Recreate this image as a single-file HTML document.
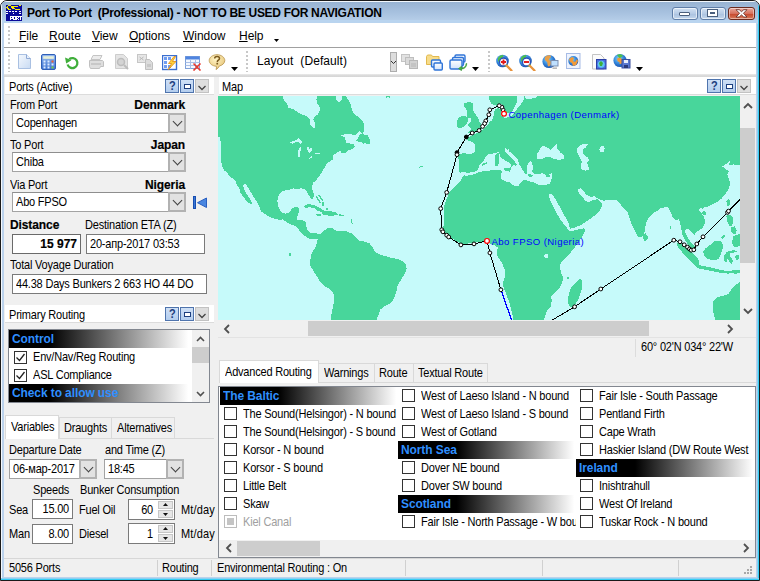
<!DOCTYPE html>
<html><head><meta charset="utf-8"><title>Port To Port</title>
<style>
*{box-sizing:border-box;margin:0;padding:0}
html,body{width:760px;height:581px;overflow:hidden;background:#fff}
body{font-family:"Liberation Sans",sans-serif;font-size:11px;color:#000;position:relative;letter-spacing:-0.2px}
.a{position:absolute}
.t{position:absolute;white-space:pre;line-height:13px;height:13px;transform:scaleY(1.13);transform-origin:0 10px}
.n{transform:none}
.b{font-weight:bold}
#win{position:absolute;left:0;top:0;width:760px;height:581px;background:#bbd2ec;border:1px solid #1a1a1a;border-radius:7px 7px 0 0;overflow:hidden}
#title{position:absolute;left:0;top:0;width:758px;height:22px;background:linear-gradient(#98b3d2 0,#a7c1df 50%,#b4cce7 84%,#b9d4ef 88%,#b9d4ef 100%);border-top:1px solid #f2f7fc}
#client{position:absolute;left:4px;top:23px;width:752px;height:554px;background:#f0f0f0}
.inp{position:absolute;background:#fff;border:1px solid #7a7a7a;height:20px}
.inp .t{top:3px}
.cb{position:absolute;background:#fff;border:1px solid #a3a3a3;border-top-color:#8e8e8e;height:20px}
.cb .t{top:3px;left:3px}
.cb .dd{position:absolute;right:-1px;top:-1px;width:18px;height:20px;background:#e2e2e2;border:2px solid #b2b2b2}
.cb .dd:after{content:"";position:absolute;left:3.500px;top:3px;width:6px;height:6px;border-right:1px solid #404040;border-bottom:1px solid #404040;transform:rotate(45deg) scale(1,1)}
.hdr{position:absolute;background:#fff;height:18px}
.hb{position:absolute;top:3px;width:14px;height:14px;background:linear-gradient(#cfe0f6,#b3cdee);border:1px solid #4f74ad}
.bb{-webkit-text-stroke:0.18px #000}
.chk{position:absolute;width:13px;height:13px;background:#fff;border:1px solid #333}
.tab{position:absolute;background:#f0f0f0;border:1px solid #d9d9d9;border-bottom:none}
.tab.sel{background:#fff}
.grad{position:absolute;height:18px;background:linear-gradient(90deg,#000 0%,#000 33%,#fff 99%)}
.grad .t{color:#2f8fff;font-weight:bold;font-size:12px;top:3px;left:3px;letter-spacing:-0.1px}
.sep{position:absolute;width:1px;background:#d0d0d0}
</style></head><body>
<div id="win"><div id="title"></div><div class="a" style="left:0;top:1px;width:1px;height:578px;background:#f4f8fc"></div><div class="a" style="left:756px;top:23px;width:1px;height:556px;background:#8fd0f0"></div><div class="a" style="left:757px;top:4px;width:1px;height:575px;background:#35cdf5"></div><div class="a" style="left:0;top:577px;width:758px;height:1px;background:#8fd0f0"></div><div class="a" style="left:0;top:578px;width:758px;height:1px;background:#35cdf5"></div></div>
<div id="client" class="a" style="left:4px;top:23px"></div>
<!-- app icon -->
<svg class="a" style="left:6px;top:5px" width="16" height="16" viewBox="0 0 16 16" shape-rendering="crispEdges"><rect width="16" height="16" fill="#0a0a9a"/><rect x="2" y="0" width="3" height="1" fill="#f4ec00"/><rect x="13" y="0" width="2" height="1" fill="#f4ec00"/><rect x="1" y="1" width="1" height="1" fill="#f4ec00"/><rect x="5" y="1" width="7" height="1" fill="#f4ec00"/><rect x="0" y="2" width="2" height="1" fill="#f4ec00"/><rect x="5" y="2" width="3" height="1" fill="#f4ec00"/><rect x="1" y="3" width="2" height="1" fill="#f4ec00"/><rect x="6" y="3" width="3" height="1" fill="#f4ec00"/><rect x="2" y="4" width="3" height="1" fill="#f4ec00"/><rect x="9" y="4" width="5" height="1" fill="#f4ec00"/><rect x="0" y="6" width="2" height="1" fill="#fff"/><rect x="3" y="6" width="2" height="1" fill="#fff"/><rect x="6" y="6" width="2" height="1" fill="#fff"/><rect x="9" y="6" width="2" height="1" fill="#fff"/><rect x="13" y="6" width="2" height="1" fill="#fff"/><rect x="0" y="8" width="2" height="1" fill="#fff"/><rect x="7" y="8" width="1" height="1" fill="#fff"/><rect x="13" y="8" width="2" height="1" fill="#fff"/><rect x="4" y="11" width="1" height="1" fill="#fff"/><rect x="5" y="11" width="1" height="1" fill="#fff"/><rect x="6" y="11" width="1" height="1" fill="#fff"/><rect x="4" y="12" width="1" height="1" fill="#fff"/><rect x="6" y="12" width="1" height="1" fill="#fff"/><rect x="4" y="13" width="1" height="1" fill="#fff"/><rect x="5" y="13" width="1" height="1" fill="#fff"/><rect x="6" y="13" width="1" height="1" fill="#fff"/><rect x="4" y="14" width="1" height="1" fill="#fff"/><rect x="7" y="11" width="1" height="1" fill="#fff"/><rect x="8" y="11" width="1" height="1" fill="#fff"/><rect x="9" y="11" width="1" height="1" fill="#fff"/><rect x="7" y="12" width="1" height="1" fill="#fff"/><rect x="9" y="12" width="1" height="1" fill="#fff"/><rect x="7" y="13" width="1" height="1" fill="#fff"/><rect x="9" y="13" width="1" height="1" fill="#fff"/><rect x="7" y="14" width="1" height="1" fill="#fff"/><rect x="8" y="14" width="1" height="1" fill="#fff"/><rect x="9" y="14" width="1" height="1" fill="#fff"/><rect x="10" y="11" width="1" height="1" fill="#fff"/><rect x="11" y="11" width="1" height="1" fill="#fff"/><rect x="12" y="11" width="1" height="1" fill="#fff"/><rect x="10" y="12" width="1" height="1" fill="#fff"/><rect x="12" y="12" width="1" height="1" fill="#fff"/><rect x="10" y="13" width="1" height="1" fill="#fff"/><rect x="11" y="13" width="1" height="1" fill="#fff"/><rect x="10" y="14" width="1" height="1" fill="#fff"/><rect x="12" y="14" width="1" height="1" fill="#fff"/><rect x="13" y="11" width="1" height="1" fill="#fff"/><rect x="14" y="11" width="1" height="1" fill="#fff"/><rect x="15" y="11" width="1" height="1" fill="#fff"/><rect x="14" y="12" width="1" height="1" fill="#fff"/><rect x="14" y="13" width="1" height="1" fill="#fff"/><rect x="14" y="14" width="1" height="1" fill="#fff"/></svg>
<div class="t b n" style="left:27px;top:6px;font-size:12px;line-height:15px;height:15px;letter-spacing:-0.31px">Port To Port  (Professional) - NOT TO BE USED FOR NAVIGATION</div>
<!-- window buttons -->
<div class="a" style="left:672px;top:7px;width:26px;height:13px;border:1px solid #5f7ea8;border-radius:3px;background:linear-gradient(#d3e2f3,#b7cce6 50%,#a9c1df 51%,#c3d6ec);box-shadow:inset 0 0 0 1px rgba(255,255,255,.6)"><div class="a" style="left:6px;top:4px;width:11px;height:4px;background:#fff;border:1px solid #4a5f7d;border-radius:1px"></div></div>
<div class="a" style="left:700px;top:7px;width:26px;height:13px;border:1px solid #5f7ea8;border-radius:3px;background:linear-gradient(#d3e2f3,#b7cce6 50%,#a9c1df 51%,#c3d6ec);box-shadow:inset 0 0 0 1px rgba(255,255,255,.6)"><div class="a" style="left:6px;top:1px;width:11px;height:8px;background:#fff;border:1px solid #4a5f7d"><div class="a" style="left:2px;top:2px;width:5px;height:2px;background:#b7cce6;border:1px solid #4a5f7d"></div></div></div>
<div class="a" style="left:728px;top:7px;width:27px;height:13px;border:1px solid #6b2a1e;border-radius:3px;background:linear-gradient(#e9a99d,#d6705c 50%,#c4452b 51%,#d87a5a);box-shadow:inset 0 0 0 1px rgba(255,255,255,.45)">
<svg class="a" style="left:6px;top:1px" width="13" height="9" viewBox="0 0 13 9"><path d="M1 .7h3.200l2.300 2 2.300-2h3.200L8.400 4.300l3.600 3.700h-3.200l-2.300-2.100-2.300 2.100H1l3.600-3.700z" fill="#fff" stroke="#5a2a22" stroke-width=".8"/></svg></div>
<!-- menu bar -->
<div class="a" style="left:4px;top:23px;width:752px;height:24px;background:#fff"></div>
<div class="a" style="left:4px;top:47px;width:752px;height:1px;background:#a0a0a0"></div>
<div class="a" style="left:8px;top:26px;width:2px;height:19px;background:repeating-linear-gradient(#c8c8c8 0,#c8c8c8 2px,#fff 2px,#fff 4px)"></div>
<div class="t n" style="left:19px;top:29px;font-size:12px;line-height:15px;height:15px;letter-spacing:-0.05px"><u>F</u>ile</div>
<div class="t n" style="left:49px;top:29px;font-size:12px;line-height:15px;height:15px;letter-spacing:-0.05px"><u>R</u>oute</div>
<div class="t n" style="left:92px;top:29px;font-size:12px;line-height:15px;height:15px;letter-spacing:-0.05px"><u>V</u>iew</div>
<div class="t n" style="left:129px;top:29px;font-size:12px;line-height:15px;height:15px;letter-spacing:-0.05px"><u>O</u>ptions</div>
<div class="t n" style="left:183px;top:29px;font-size:12px;line-height:15px;height:15px;letter-spacing:-0.05px"><u>W</u>indow</div>
<div class="t n" style="left:239px;top:29px;font-size:12px;line-height:15px;height:15px;letter-spacing:-0.05px"><u>H</u>elp</div>
<svg class="a" style="left:273.5px;top:39px" width="5" height="3"><path d="M0 0h5L2.500 3z" fill="#000"/></svg>
<!-- toolbar -->
<div class="a" style="left:4px;top:48px;width:752px;height:26px;background:#fff"></div>
<div class="a" style="left:4px;top:74px;width:752px;height:3px;background:linear-gradient(#ececec,#dcdcdc 40%,#d6d6d6)"></div>
<div class="a" style="left:8px;top:51px;width:2px;height:21px;background:repeating-linear-gradient(#c8c8c8 0,#c8c8c8 2px,#fff 2px,#fff 4px)"></div>
<div class="a" style="left:246px;top:51px;width:2px;height:21px;background:repeating-linear-gradient(#c8c8c8 0,#c8c8c8 2px,#fff 2px,#fff 4px)"></div>
<div class="a" style="left:488px;top:51px;width:2px;height:21px;background:repeating-linear-gradient(#c8c8c8 0,#c8c8c8 2px,#fff 2px,#fff 4px)"></div>
<div class="t n" style="left:257px;top:54px;font-size:12px;line-height:15px;height:15px;letter-spacing:0.08px">Layout  (Default)</div>
<svg width="0" height="0" style="position:absolute"><defs>
<linearGradient id="gPage" x1="0" y1="0" x2="1" y2="1"><stop offset="0" stop-color="#f4f8fd"/><stop offset="1" stop-color="#c9dbf3"/></linearGradient>
<linearGradient id="gCalc" x1="0" y1="0" x2="0" y2="1"><stop offset="0" stop-color="#8db4ee"/><stop offset="1" stop-color="#3f74d2"/></linearGradient>
<radialGradient id="gGlobe" cx=".4" cy=".35" r=".7"><stop offset="0" stop-color="#7fd3ff"/><stop offset=".6" stop-color="#2f7fd6"/><stop offset="1" stop-color="#1b4fa8"/></radialGradient>
<radialGradient id="gBub" cx=".4" cy=".3" r=".8"><stop offset="0" stop-color="#fff3c4"/><stop offset=".7" stop-color="#ecd08a"/><stop offset="1" stop-color="#c9a557"/></radialGradient>
<linearGradient id="gWin" x1="0" y1="0" x2="0" y2="1"><stop offset="0" stop-color="#ffffff"/><stop offset="1" stop-color="#cfe1fb"/></linearGradient>
</defs></svg>
<!-- 1 new doc -->
<svg class="a" style="left:17px;top:53px" width="16" height="17" viewBox="0 0 16 17"><path d="M1.5 1.5h8l4 4v10h-12z" fill="url(#gPage)" stroke="#a9c0e2" stroke-width="1"/><path d="M9.5 1.5v4h4" fill="#e8f0fb" stroke="#8fa9d4" stroke-width="1"/></svg>
<!-- 2 calculator -->
<svg class="a" style="left:41px;top:54px" width="15" height="16" viewBox="0 0 15 16"><rect x=".5" y=".5" width="14" height="15" rx="1.5" fill="url(#gCalc)" stroke="#2f5fb8"/><rect x="2" y="2" width="11" height="3" fill="#e6f0d8" stroke="#a8c0e8" stroke-width=".5"/>
<g fill="#dce9ff"><rect x="2.5" y="6.5" width="2" height="2"/><rect x="6.5" y="6.5" width="2" height="2"/><rect x="2.5" y="9.5" width="2" height="2"/><rect x="6.5" y="9.5" width="2" height="2"/><rect x="2.5" y="12.5" width="2" height="2"/><rect x="6.5" y="12.5" width="2" height="2"/><rect x="10.5" y="9.5" width="2" height="2"/></g><rect x="10.5" y="6.5" width="2" height="2" fill="#f06030"/><rect x="10.5" y="12.5" width="2" height="2" fill="#7fd040"/></svg>
<!-- 3 refresh -->
<svg class="a" style="left:64px;top:55px" width="16" height="15" viewBox="0 0 16 15"><path d="M5.2 4.2A5 5 0 1 1 3.6 9.5" fill="none" stroke="#3fae3a" stroke-width="2.3"/><path d="M1 2.5l1.2 6 5.2-3.2z" fill="#3fae3a"/></svg>
<!-- 4 printer disabled -->
<svg class="a" style="left:88px;top:54px" width="17" height="16" viewBox="0 0 17 16"><path d="M5 1.5h9l-2 4h-9z" fill="#ececec" stroke="#c4c4c4"/><path d="M1.5 6.5h13l1 1v5h-3l-1 2h-9l-1-2z" fill="#dedede" stroke="#c0c0c0"/><rect x="3" y="9" width="10" height="2" fill="#c8c8c8"/></svg>
<!-- 5 preview disabled -->
<svg class="a" style="left:114px;top:54px" width="16" height="16" viewBox="0 0 16 16"><path d="M1.5 .5h8l4 4v10h-12z" fill="#e4e4e4" stroke="#cdcdcd"/><circle cx="7" cy="8" r="3.5" fill="#d4d4d4" stroke="#bdbdbd" stroke-width="1.5"/><path d="M10 11l4 4" stroke="#bdbdbd" stroke-width="2"/></svg>
<!-- 6 copy disabled -->
<svg class="a" style="left:137px;top:54px" width="17" height="16" viewBox="0 0 17 16"><rect x=".5" y=".5" width="9" height="8" fill="#e6e6e6" stroke="#c6c6c6"/><path d="M2.5 3l4 3M6.5 3l-4 3" stroke="#b8b8b8"/><path d="M8.500 5.500h4l3 3v7h-7z" fill="#dcdcdc" stroke="#c0c0c0"/><rect x="10" y="10" width="4" height="3" fill="#c8c8c8"/></svg>
<!-- 7 grid + lightning -->
<svg class="a" style="left:162px;top:55px" width="16" height="16" viewBox="0 0 16 16"><rect x=".5" y=".5" width="14" height="14" fill="#fff" stroke="#3b6fd0" stroke-width="1.4"/><g fill="#6f9cf0"><rect x="2" y="2" width="3" height="3"/><rect x="2" y="6" width="3" height="3"/><rect x="2" y="10" width="3" height="3"/><rect x="6" y="2" width="3" height="3"/><rect x="6" y="10" width="3" height="3"/></g><path d="M12 1.500L6.500 8.500h3L6 15l8-8.500h-3.500L13.500 1.500z" fill="#ffd23a" stroke="#e08a10" stroke-width=".8"/></svg>
<!-- 8 table + x -->
<svg class="a" style="left:185px;top:56px" width="17" height="15" viewBox="0 0 17 15"><rect x=".5" y=".5" width="14" height="12" fill="#f4f8ff" stroke="#7fa0d8"/><rect x=".5" y=".5" width="14" height="3" fill="#4f84e0"/><path d="M.5 6.500h14M.5 9.500h14M5.500 3.500v9M10.500 3.500v9" stroke="#a9bfe6"/><path d="M8.500 7.500l7 7M15.500 7.500l-7 7" stroke="#e8392e" stroke-width="1.6"/></svg>
<!-- 9 help bubble -->
<svg class="a" style="left:208px;top:54px" width="18" height="16" viewBox="0 0 18 16"><path d="M9 .7c4.300 0 7.800 2.600 7.800 5.800 0 2.600-2.300 4.800-5.500 5.500-.6 1.500-1.700 2.700-3.300 3.500.5-1 .6-2.100.4-3.200C4.200 12 1.200 9.500 1.200 6.500 1.200 3.300 4.700 .7 9 .7z" fill="url(#gBub)" stroke="#b8934a" stroke-width=".8"/><path d="M6.700 4.600c0-1.300 1-2.100 2.400-2.100s2.400.8 2.400 2c0 1.700-2.200 1.700-2.200 3.400" fill="none" stroke="#7a5a1e" stroke-width="1.500"/><rect x="8.400" y="8.800" width="1.700" height="1.700" fill="#7a5a1e"/></svg>
<svg class="a" style="left:231px;top:67px" width="7" height="4"><path d="M0 0h7L3.500 4z" fill="#000"/></svg>
<!-- layout dropdown -->
<div class="a" style="left:390px;top:52px;width:7px;height:20px;background:#dddddd;border:1px solid #adadad"></div>
<svg class="a" style="left:390px;top:60px" width="7" height="5"><path d="M1 1l2.500 2.500L6 1" fill="none" stroke="#333" stroke-width="1"/></svg>
<!-- disabled windows -->
<svg class="a" style="left:401px;top:54px" width="18" height="16" viewBox="0 0 18 16"><rect x=".5" y=".5" width="8" height="7" fill="#e2e2e2" stroke="#c4c4c4"/><rect x="4.500" y="3.500" width="8" height="7" fill="#dadada" stroke="#bebebe"/><rect x="8.500" y="6.500" width="8" height="8" fill="#d2d2d2" stroke="#b8b8b8"/><rect x="10" y="9" width="5" height="4" fill="#c4c4c4"/></svg>
<!-- folder + windows -->
<svg class="a" style="left:426px;top:54px" width="17" height="17" viewBox="0 0 17 17"><path d="M.5 2.500l1-1.500h4l1 1.500h6.500v8h-12.500z" fill="#f7dc8a" stroke="#e2b94e"/><rect x="5.500" y="6" width="9" height="7" rx="1" fill="url(#gWin)" stroke="#2f74d8" stroke-width="1.400"/><rect x="8" y="9" width="8.300" height="7" rx="1" fill="url(#gWin)" stroke="#2f74d8" stroke-width="1.400"/></svg>
<!-- windows + arrow -->
<svg class="a" style="left:449px;top:54px" width="19" height="17" viewBox="0 0 19 17"><rect x="6" y="1" width="10" height="7" rx="1.200" fill="url(#gWin)" stroke="#2f74d8" stroke-width="1.400"/><rect x="3.500" y="3.500" width="11" height="8" rx="1.200" fill="url(#gWin)" stroke="#2f74d8" stroke-width="1.400"/><rect x="1" y="6" width="12" height="9" rx="1.200" fill="url(#gWin)" stroke="#2f74d8" stroke-width="1.400"/><path d="M17 9.500c0 3-2 4.500-4.500 4.500v-1.800L9.500 14.500l3 2.300V15c3 0 5.300-2 5.300-5.500z" fill="#46b43c" stroke="#2f8f2a" stroke-width=".5"/></svg>
<svg class="a" style="left:472px;top:67px" width="7" height="4"><path d="M0 0h7L3.500 4z" fill="#000"/></svg>
<!-- zoom in -->
<svg class="a" style="left:495px;top:54px" width="18" height="17" viewBox="0 0 18 17"><circle cx="7.500" cy="7" r="6.300" fill="url(#gGlobe)"/><path d="M3 4c1-2 3-3 5-3 1 1 0 2-1 3s-2 1-2 3-1 1-2 0z M10 9c1 0 3 1 3 2-1 1-3 2-4 2s0-3 1-4z" fill="#4cc04a"/><circle cx="8.500" cy="8" r="4" fill="#fff" stroke="#2a4fb8" stroke-width="1.300"/><path d="M6 8h5M8.500 5.500v5" stroke="#e01818" stroke-width="1.900"/><path d="M11.500 11.500l5 5" stroke="#e8923a" stroke-width="2.300" stroke-linecap="round"/></svg>
<!-- zoom out -->
<svg class="a" style="left:518px;top:54px" width="18" height="17" viewBox="0 0 18 17"><circle cx="7.500" cy="7" r="6.300" fill="url(#gGlobe)"/><path d="M3 4c1-2 3-3 5-3 1 1 0 2-1 3s-2 1-2 3-1 1-2 0z M10 9c1 0 3 1 3 2-1 1-3 2-4 2s0-3 1-4z" fill="#4cc04a"/><circle cx="8.500" cy="8" r="4" fill="#fff" stroke="#2a4fb8" stroke-width="1.300"/><path d="M6 8h5" stroke="#e01818" stroke-width="1.900"/><path d="M11.500 11.500l5 5" stroke="#e8923a" stroke-width="2.300" stroke-linecap="round"/></svg>
<!-- globe + monitor -->
<svg class="a" style="left:542px;top:54px" width="17" height="16" viewBox="0 0 17 16"><circle cx="7" cy="7.500" r="6.600" fill="url(#gGlobe)"/><path d="M3 3c2-2 5-2 6-1 0 2-2 2-2 4 2 1 3 2 2 4s-2 3-3 2 0-3-1-4-3-2-2-5z" fill="#e8a04a"/><rect x="9" y="6.500" width="7" height="5.500" fill="#bfe0ff" stroke="#7a8fb0"/><path d="M10.500 13.500h4.500v1.300h-4.500z" fill="#a8a8a8"/></svg>
<!-- map picture -->
<svg class="a" style="left:566px;top:53px" width="15" height="16" viewBox="0 0 15 16"><rect x=".5" y=".5" width="13.500" height="15" fill="#eef3fd" stroke="#a7bce6"/><circle cx="7.300" cy="8" r="5" fill="url(#gGlobe)"/><path d="M3 6l3-2 2 1-1 3 2 1 2-3 1 2-2 4-3 1-1-3-2-1z" fill="#f09a3a"/></svg>
<!-- doc globe -->
<svg class="a" style="left:591px;top:54px" width="16" height="16" viewBox="0 0 16 16"><path d="M1.500 .5h8l3.500 3.500v11h-11.500z" fill="#fbfbfb" stroke="#c4c4c4"/><rect x="5.500" y="5.500" width="9.500" height="9.500" fill="#4a6fe0" stroke="#2a3fa8"/><circle cx="10.200" cy="10.200" r="3.500" fill="#5fc7f0"/><path d="M8 9l2-2 2 2-1 3-2 0z" fill="#3fae3a"/></svg>
<!-- globe + floppy -->
<svg class="a" style="left:613px;top:53px" width="18" height="16" viewBox="0 0 18 16"><circle cx="7" cy="7.500" r="6.600" fill="url(#gGlobe)"/><path d="M4 2c2-1 5-1 6 1-1 1-3 1-3 3z" fill="#4cc04a"/><path d="M4.500 5c2-1 5 0 5 3s-2 3-3 3v-2c-2 0-3-2-2-4z" fill="#f09a3a"/><rect x="9" y="6.500" width="8" height="8.500" fill="#5a78d0" stroke="#3a4f9e"/><rect x="11" y="7" width="4" height="3" fill="#e8eefc"/><rect x="11" y="12" width="4" height="3" fill="#2a3a7a"/></svg>
<svg class="a" style="left:636px;top:67px" width="7" height="4"><path d="M0 0h7L3.500 4z" fill="#000"/></svg>
<!-- Ports header -->
<div class="hdr" style="left:5px;top:77px;width:209px"></div>
<div class="a" style="left:5px;top:94px;width:209px;height:1px;background:#dcdcdc"></div>
<div class="t" style="left:9px;top:81px">Ports (Active)</div>
<div class="hb" style="left:165px;top:79px"></div><div class="hb" style="left:180px;top:79px"></div><div class="hb" style="left:195px;top:79px;background:#dedede;border-color:#c2c2c2"></div>
<div class="t b" style="left:169px;top:80px;font-size:11px;color:#1d3f7f">?</div>
<div class="a" style="left:184px;top:84px;width:7px;height:5px;border:1px solid #1d3f7f;background:#fff"></div>
<svg class="a" style="left:198px;top:85px" width="8" height="6"><path d="M.5 1L4 4.500 7.500 1" fill="none" stroke="#444" stroke-width="1.300"/></svg>
<!-- Ports body -->
<div class="t" style="left:10px;top:99px">From Port</div><div class="t b bb" style="left:100px;width:85px;text-align:right;top:99px;font-size:12px;letter-spacing:-0.1px">Denmark</div>
<div class="cb" style="left:12px;top:113px;width:174px"><div class="t">Copenhagen</div><div class="dd"></div></div>
<div class="t" style="left:10px;top:139px">To Port</div><div class="t b bb" style="left:100px;width:85px;text-align:right;top:139px;font-size:12px;letter-spacing:-0.1px">Japan</div>
<div class="cb" style="left:12px;top:152px;width:174px"><div class="t">Chiba</div><div class="dd"></div></div>
<div class="t" style="left:10px;top:179px">Via Port</div><div class="t b bb" style="left:100px;width:85px;text-align:right;top:179px;font-size:12px;letter-spacing:-0.1px">Nigeria</div>
<div class="cb" style="left:12px;top:192px;width:174px"><div class="t">Abo FPSO</div><div class="dd"></div></div>
<svg class="a" style="left:193px;top:196px" width="15" height="13" viewBox="0 0 15 13"><rect x="0.5" y="0.5" width="2" height="12" fill="#3a78d8" stroke="#1a4fb0" stroke-width="1"/><path d="M13.500 2v9.500L4.500 6.700z" fill="#4a86e0" stroke="#2a5fc0" stroke-width="1"/></svg>
<div class="t b bb" style="left:10px;top:219px;font-size:12px;letter-spacing:-0.1px">Distance</div><div class="t" style="left:85px;top:219px">Destination ETA (Z)</div>
<div class="inp" style="left:12px;top:234px;width:69px;border:1px solid #6a6a6a"><div class="t b bb" style="right:3px;top:3px;font-size:12px;letter-spacing:0">15 977</div></div>
<div class="inp" style="left:86px;top:234px;width:119px"><div class="t" style="left:3px">20-апр-2017 03:53</div></div>
<div class="t" style="left:10px;top:259px">Total Voyage Duration</div>
<div class="inp" style="left:12px;top:274px;width:195px"><div class="t" style="left:3px">44.38 Days Bunkers 2 663 HO 44 DO</div></div>
<!-- Primary routing header -->
<div class="hdr" style="left:5px;top:305px;width:209px"></div>
<div class="a" style="left:5px;top:322px;width:209px;height:1px;background:#dcdcdc"></div>
<div class="t" style="left:9px;top:309px">Primary Routing</div>
<div class="hb" style="left:165px;top:307px"></div><div class="hb" style="left:180px;top:307px"></div><div class="hb" style="left:195px;top:307px;background:#dedede;border-color:#c2c2c2"></div>
<div class="t b" style="left:169px;top:308px;font-size:11px;color:#1d3f7f">?</div>
<div class="a" style="left:184px;top:312px;width:7px;height:5px;border:1px solid #1d3f7f;background:#fff"></div>
<svg class="a" style="left:198px;top:313px" width="8" height="6"><path d="M.5 1L4 4.500 7.500 1" fill="none" stroke="#444" stroke-width="1.300"/></svg>
<!-- routing list -->
<div class="a" style="left:8px;top:329px;width:202px;height:74px;background:#fff;border:1px solid #828790"></div>
<div class="grad" style="left:9px;top:330px;width:183px;background:linear-gradient(90deg,#000 0,#000 22%,#fff 98%)"><div class="t">Control</div></div>
<div class="chk" style="left:14px;top:351px"></div><svg class="a" style="left:15px;top:352px" width="11" height="11"><path d="M1.5 5.5l3 3 5-6.5" fill="none" stroke="#222" stroke-width="1.3"/></svg>
<div class="t" style="left:33px;top:351px">Env/Nav/Reg Routing</div>
<div class="chk" style="left:14px;top:369px"></div><svg class="a" style="left:15px;top:370px" width="11" height="11"><path d="M1.5 5.5l3 3 5-6.5" fill="none" stroke="#222" stroke-width="1.3"/></svg>
<div class="t" style="left:33px;top:369px">ASL Compliance</div>
<div class="grad" style="left:9px;top:384px;width:183px;background:linear-gradient(90deg,#000 0,#000 22%,#fff 98%)"><div class="t">Check to allow use</div></div>
<div class="a" style="left:192px;top:330px;width:17px;height:72px;background:#f0f0f0"></div>
<div class="a" style="left:192px;top:347px;width:17px;height:16px;background:#cdcdcd"></div>
<svg class="a" style="left:196px;top:336px" width="9" height="6"><path d="M1 5L4.5 1.5 8 5" fill="none" stroke="#505050" stroke-width="1.6"/></svg>
<svg class="a" style="left:196px;top:391px" width="9" height="6"><path d="M1 1L4.5 4.5 8 1" fill="none" stroke="#505050" stroke-width="1.6"/></svg>
<!-- tabs -->
<div class="a" style="left:5px;top:438px;width:209px;height:1px;background:#d9d9d9"></div>
<div class="tab sel" style="left:5px;top:415px;width:54px;height:24px"></div><div class="t" style="left:11px;top:421px">Variables</div>
<div class="tab" style="left:59px;top:417px;width:53px;height:21px"></div><div class="t" style="left:64px;top:422px">Draughts</div>
<div class="tab" style="left:111px;top:417px;width:64px;height:21px"></div><div class="t" style="left:117px;top:422px">Alternatives</div>
<div class="t" style="left:9px;top:444px">Departure Date</div><div class="t" style="left:105px;top:444px">and Time (Z)</div>
<div class="cb" style="left:9px;top:459px;width:88px"><div class="t">06-мар-2017</div><div class="dd"></div></div>
<div class="cb" style="left:104px;top:459px;width:80px"><div class="t">18:45</div><div class="dd"></div></div>
<div class="t" style="left:33px;top:484px">Speeds</div><div class="t" style="left:80px;top:484px">Bunker Consumption</div>
<div class="t" style="left:9px;top:504px">Sea</div><div class="inp" style="left:32px;top:499px;width:41px"><div class="t" style="right:3px">15.00</div></div>
<div class="t" style="left:79px;top:504px">Fuel Oil</div>
<div class="inp" style="left:128px;top:499px;width:47px;height:21px"><div class="t" style="right:21px;top:4px">60</div></div>
<div class="t" style="left:181px;top:504px;letter-spacing:0.15px">Mt/day</div>
<div class="t" style="left:9px;top:528px">Man</div><div class="inp" style="left:32px;top:524px;width:41px"><div class="t" style="right:3px">8.00</div></div>
<div class="t" style="left:79px;top:528px">Diesel</div>
<div class="inp" style="left:128px;top:523px;width:47px;height:21px"><div class="t" style="right:21px;top:4px">1</div></div>
<div class="t" style="left:181px;top:528px;letter-spacing:0.15px">Mt/day</div>
<!-- spinners -->
<div class="a" style="left:158px;top:501px;width:15px;height:8px;background:#e6e6e6;border:1px solid #c6c6c6"></div><svg class="a" style="left:163px;top:503px" width="5" height="3"><path d="M0 3L2.500 0 5 3z" fill="#111"/></svg><div class="a" style="left:158px;top:510px;width:15px;height:8px;background:#e6e6e6;border:1px solid #c6c6c6"></div><svg class="a" style="left:163px;top:513px" width="5" height="3"><path d="M0 0L2.500 3 5 0z" fill="#111"/></svg>
<div class="a" style="left:158px;top:525px;width:15px;height:8px;background:#e6e6e6;border:1px solid #c6c6c6"></div><svg class="a" style="left:163px;top:527px" width="5" height="3"><path d="M0 3L2.500 0 5 3z" fill="#111"/></svg><div class="a" style="left:158px;top:534px;width:15px;height:8px;background:#e6e6e6;border:1px solid #c6c6c6"></div><svg class="a" style="left:163px;top:537px" width="5" height="3"><path d="M0 0L2.500 3 5 0z" fill="#111"/></svg>
<!-- status bar -->
<div class="a" style="left:4px;top:558px;width:752px;height:1px;background:#d7d7d7"></div>
<div class="t" style="left:9px;top:562px">5056 Ports</div><div class="sep" style="left:157px;top:560px;height:16px"></div>
<div class="t" style="left:162px;top:562px">Routing</div><div class="sep" style="left:211px;top:560px;height:16px"></div>
<div class="t" style="left:217px;top:562px">Environmental Routing : On</div>
<div class="sep" style="left:405px;top:560px;height:16px"></div><div class="sep" style="left:542px;top:560px;height:16px"></div><div class="sep" style="left:678px;top:560px;height:16px"></div>
<svg class="a" style="left:744px;top:566px" width="8" height="8" shape-rendering="crispEdges"><g fill="#a8a8a8"><rect x="6" y="0" width="2" height="2"/><rect x="3" y="3" width="2" height="2"/><rect x="6" y="3" width="2" height="2"/><rect x="0" y="6" width="2" height="2"/><rect x="3" y="6" width="2" height="2"/><rect x="6" y="6" width="2" height="2"/></g></svg>
<!-- Map header -->
<div class="hdr" style="left:219px;top:77px;width:537px"></div>
<div class="a" style="left:219px;top:94px;width:537px;height:1px;background:#dcdcdc"></div>
<div class="t" style="left:222px;top:81px">Map</div>
<div class="hb" style="left:707px;top:79px"></div><div class="hb" style="left:722px;top:79px"></div><div class="hb" style="left:737px;top:79px;background:#dedede;border-color:#c2c2c2"></div>
<div class="t b" style="left:711px;top:80px;font-size:11px;color:#1d3f7f">?</div>
<div class="a" style="left:726px;top:84px;width:7px;height:5px;border:1px solid #1d3f7f;background:#fff"></div>
<svg class="a" style="left:740px;top:85px" width="8" height="6"><path d="M.5 1L4 4.500 7.500 1" fill="none" stroke="#444" stroke-width="1.300"/></svg>
<!-- map scrollbars -->
<div class="a" style="left:739px;top:96px;width:17px;height:224px;background:#f0f0f0"></div>
<div class="a" style="left:740px;top:128px;width:15px;height:135px;background:#cdcdcd"></div>
<svg class="a" style="left:743px;top:102px" width="10" height="7"><path d="M1 6L5 2 9 6" fill="none" stroke="#505050" stroke-width="1.8"/></svg>
<svg class="a" style="left:743px;top:308px" width="10" height="7"><path d="M1 1L5 5 9 1" fill="none" stroke="#505050" stroke-width="1.8"/></svg>
<div class="a" style="left:218px;top:320px;width:522px;height:17px;background:#f0f0f0"></div>
<div class="a" style="left:308px;top:321px;width:341px;height:15px;background:#cdcdcd"></div>
<svg class="a" style="left:223px;top:324px" width="7" height="10"><path d="M6 1L2 5 6 9" fill="none" stroke="#505050" stroke-width="1.8"/></svg>
<svg class="a" style="left:727px;top:324px" width="7" height="10"><path d="M1 1L5 5 1 9" fill="none" stroke="#505050" stroke-width="1.8"/></svg>
<div class="a" style="left:218px;top:337px;width:538px;height:1px;background:#e3e3e3"></div>
<div class="sep" style="left:635px;top:339px;height:18px;background:#dcdcdc"></div>
<div class="t" style="left:641px;top:341px">60° 02'N 034° 22'W</div>
<!-- bottom tabs -->
<div class="a" style="left:219px;top:382px;width:537px;height:1px;background:#d9d9d9"></div>
<div class="tab sel" style="left:219px;top:360px;width:100px;height:23px;background:#fff"></div><div class="t" style="left:225px;top:366px">Advanced Routing</div>
<div class="tab" style="left:318px;top:363px;width:57px;height:19px"></div><div class="t" style="left:324px;top:367px">Warnings</div>
<div class="tab" style="left:374px;top:363px;width:40px;height:19px"></div><div class="t" style="left:379px;top:367px">Route</div>
<div class="tab" style="left:413px;top:363px;width:75px;height:19px;border-right:1px solid #d9d9d9"></div><div class="t" style="left:418px;top:367px">Textual Route</div>
<!-- list -->
<div class="a" style="left:218px;top:386px;width:538px;height:172px;background:#fff;border:1px solid #828790"></div>
<div class="a" style="left:219px;top:540px;width:536px;height:17px;background:#f0f0f0"></div>
<div class="a" style="left:237px;top:541px;width:83px;height:15px;background:#cdcdcd"></div>
<svg class="a" style="left:225px;top:543px" width="7" height="10"><path d="M6 1L2 5 6 9" fill="none" stroke="#505050" stroke-width="1.8"/></svg>
<svg class="a" style="left:743px;top:543px" width="7" height="10"><path d="M1 1L5 5 1 9" fill="none" stroke="#505050" stroke-width="1.8"/></svg>
<div class="a" style="left:220px;top:387px;width:178px;height:152px;overflow:hidden">
<div class="grad" style="left:0;top:0px;width:178px"><div class="t">The Baltic</div></div>
<div class="chk" style="left:4px;top:20px;border-color:#333"></div>
<div class="t" style="left:23px;top:21px">The Sound(Helsingor) - N bound</div>
<div class="chk" style="left:4px;top:38px;border-color:#333"></div>
<div class="t" style="left:23px;top:39px">The Sound(Helsingor) - S bound</div>
<div class="chk" style="left:4px;top:56px;border-color:#333"></div>
<div class="t" style="left:23px;top:57px">Korsor - N bound</div>
<div class="chk" style="left:4px;top:74px;border-color:#333"></div>
<div class="t" style="left:23px;top:75px">Korsor - S bound</div>
<div class="chk" style="left:4px;top:92px;border-color:#333"></div>
<div class="t" style="left:23px;top:93px">Little Belt</div>
<div class="chk" style="left:4px;top:110px;border-color:#333"></div>
<div class="t" style="left:23px;top:111px">Skaw</div>
<div class="chk" style="left:4px;top:128px;border-color:#bcbcbc"></div>
<div class="a" style="left:7px;top:131px;width:7px;height:7px;background:#c4c4c4"></div>
<div class="t" style="left:23px;top:129px ;color:#a0a0a0">Kiel Canal</div>
</div>
<div class="a" style="left:398px;top:387px;width:178px;height:152px;overflow:hidden">
<div class="chk" style="left:4px;top:2px;border-color:#333"></div>
<div class="t" style="left:23px;top:3px">West of Laeso Island - N bound</div>
<div class="chk" style="left:4px;top:20px;border-color:#333"></div>
<div class="t" style="left:23px;top:21px">West of Laeso Island - S bound</div>
<div class="chk" style="left:4px;top:38px;border-color:#333"></div>
<div class="t" style="left:23px;top:39px">West of Gotland</div>
<div class="grad" style="left:0;top:54px;width:178px"><div class="t">North Sea</div></div>
<div class="chk" style="left:4px;top:74px;border-color:#333"></div>
<div class="t" style="left:23px;top:75px">Dover NE bound</div>
<div class="chk" style="left:4px;top:92px;border-color:#333"></div>
<div class="t" style="left:23px;top:93px">Dover SW bound</div>
<div class="grad" style="left:0;top:108px;width:178px"><div class="t">Scotland</div></div>
<div class="chk" style="left:4px;top:128px;border-color:#333"></div>
<div class="t" style="left:23px;top:129px">Fair Isle - North Passage - W bound</div>
</div>
<div class="a" style="left:576px;top:387px;width:179px;height:152px;overflow:hidden">
<div class="chk" style="left:4px;top:2px;border-color:#333"></div>
<div class="t" style="left:23px;top:3px">Fair Isle - South Passage</div>
<div class="chk" style="left:4px;top:20px;border-color:#333"></div>
<div class="t" style="left:23px;top:21px">Pentland Firth</div>
<div class="chk" style="left:4px;top:38px;border-color:#333"></div>
<div class="t" style="left:23px;top:39px">Cape Wrath</div>
<div class="chk" style="left:4px;top:56px;border-color:#333"></div>
<div class="t" style="left:23px;top:57px">Haskier Island (DW Route West</div>
<div class="grad" style="left:0;top:72px;width:179px"><div class="t">Ireland</div></div>
<div class="chk" style="left:4px;top:92px;border-color:#333"></div>
<div class="t" style="left:23px;top:93px">Inishtrahull</div>
<div class="chk" style="left:4px;top:110px;border-color:#333"></div>
<div class="t" style="left:23px;top:111px">West Of Ireland</div>
<div class="chk" style="left:4px;top:128px;border-color:#333"></div>
<div class="t" style="left:23px;top:129px">Tuskar Rock - N bound</div>
</div>
<svg class="a" style="left:218px;top:96px" width="522" height="224" viewBox="218 96 522 224">
<rect x="218" y="96" width="522" height="224" fill="#c6fafa"/>
<g shape-rendering="crispEdges"><path d="M218 96L345.8 96L348.6 100.1L350.6 104.3L352 109.8L354.1 114L358.2 116.7L361 119.5L363.8 122.9L364.4 127.8L363.8 131.9L361 133.3L359.6 130.5L356.8 134L354.1 135.4L350.6 134L345.1 134L341 135.4L345.1 137.4L345.8 142.3L350.6 143.7L354.1 144.4L355.1 147.1L352 149.2L347.9 150.6L345.1 153.3L341.7 153.3L340.3 150.6L336.8 152.6L333.4 155.4L332.7 159.6L328.5 162.3L325.8 165.1L323.7 169.2L322.3 171L320.2 175.1L316.8 179.3L313.3 182.7L311.9 186.2L312.6 190.3L314 194.5L313.3 198.6L311.3 199.3L309.2 195.9L307.1 191.7L305 189L300.9 188.3L296.8 189L293.3 188.3L289.8 189.7L285.7 190.3L281.6 191.7L278.8 195.2L277.4 200L277.7 204.8L279.5 209L281.6 212.4L285.7 213.8L289.2 212.4L291.2 209.7L293.3 207.6L297.4 207.2L299.5 209L298.8 212.4L297.4 215.9L296.8 219.4L300.2 220L303.7 220.7L306.4 222.8L306.4 226.3L307.8 230.4L310.6 232.9L314.7 233.4L317 233.1L319 235.6L318.4 238.6L315.1 238.6L312 239.3L308.3 238.2L304.3 235.7L300.2 231.8L297.4 227.6L294 225.6L289.8 224.2L285.7 221.4L282.9 219.4L279.5 220L274.6 218.7L269.1 216.6L264.3 213.8L260.8 211.1L259.4 206.2L257 202.1L253.9 197.2L250.9 192.4L248.1 187.6L245.4 183.7L242.9 184.8L244.5 189.7L246.6 193.8L249.2 197.9L251.2 201.4L252.5 204.6L249.1 203.2L246 200.3L243.3 196.8L240.5 193.1L239.4 189L236.7 184.1L235.3 180L231.8 177.9L228.4 174.5L226 171L224.2 170.6L221.9 165.1L220.8 158.2L221 151.3L220.8 141.6L219.7 137.4L218 136.8ZM317.5 234.5L321.6 233.4L324.3 230.3L328 228.1L331.7 227.5L334.5 230.3L339.1 231.2L344.6 230.8L351.1 233.1L354.7 236.7L358.4 240.4L363.9 241.3L369.5 243.2L372.2 246.9L375 251.5L378.7 254.2L385.1 256.1L391.6 257.9L397.1 258.8L401.7 260.7L405.9 264.4L406.7 269L404.5 274.5L400.8 280L397.1 286.5L396.2 292.9L393.4 299.4L390.7 303.1L385.1 305.8L380.5 309.5L378.7 314.1L375.9 321.5L330.4 321.5L331.2 315L332.6 308.6L334.1 301.2L333.6 293.8L329.9 289.2L325.3 286.5L320.7 282.8L317 276.3L313.3 270.8L310.2 265.3L310.5 258.8L312 252.4L315.1 247.8L317 242.3L318.3 237.7ZM488.8 95.3L741 95L740.9 164.4L736.8 165.1L733.3 164.4L729.2 165.1L729.9 160.9L726.4 163.7L722.3 166.5L725.7 169.2L729.2 171.3L726.4 176L727.1 173.8L727.8 176.5L729.2 179.3L729.9 183.4L729.2 187.6L727.1 191.7L724.3 195.2L721.6 198.6L718.1 201.4L714 203.5L709.8 205.5L707.1 207.2L704.3 206.9L702.9 209L700.9 208L698.8 209L699.5 211.1L701.6 213.1L703.6 216.6L705 220.7L704.3 224.9L702.2 228.3L698.8 230.4L696 232.5L694.6 234.6L692.6 233.2L689.8 230.4L687 228.3L685 230.4L685.7 233.9L687.7 237.3L690.5 241.5L694 245.6L696 248.4L696 250.4L694.9 252.2L693.3 251.5L691.2 249.1L688.4 245.6L686.4 242.2L684.3 238.7L682.5 234.6L681.5 230.4L680.8 226.3L680.1 222.1L678.8 219.1L676 220L673.2 218L671.2 213.8L669.1 209.7L667.7 206.6L665.6 207.2L660.1 208.3L658 210.4L654.6 212.4L651.1 215.2L647.7 219.4L645.6 224.9L644.9 230.4L643.5 235.9L641.5 237L638 236.6L635.2 231.8L632.5 226.3L630.4 220.7L629 216.6L627.6 211.8L624.9 209L621.4 205.5L618.7 202.1L615.9 200L607.6 200.3L603.5 200.7L597.9 198.6L595.2 197.9L599.3 200.7L602.1 204.2L601.4 207.6L599.3 211.1L595.9 214.5L592.4 217.3L588.3 220L584.1 222.8L580 225.6L574.4 227.6L569.6 228.8L569.2 231.1L574.4 230.4L580 229L584.4 228.3L584.8 231.8L582.7 235.9L580 240.1L577.2 244.2L573.8 248.4L571 251L576.7 246L575.3 247.4L571.9 250.8L569.1 254.3L565.7 257.7L562.2 261.2L560.1 264.7L560.4 269.5L561.5 273.6L562.9 276.4L562.6 281.2L560.8 286.1L558.1 289.5L554.6 293L551.2 296.4L551.8 301.3L550.5 306.8L547 310.2L545.6 315.1L542.9 321.3L513.8 321.3L512.5 315.1L511.1 309.6L509.7 304L507.6 297.8L505.6 292.3L503.5 287.4L502.8 283.3L504.2 279.2L505.6 275L504.6 269.5L502.8 264.7L500 259.8L497.3 255.7L496.6 251.5L498.7 246L497.1 247.4L494.3 245.3L489.5 243.3L484.6 241.2L479.1 241.9L472.2 242.9L465.3 244L459.8 243.3L454.2 239.8L448.7 236.4L444.6 231.5L441.8 226L443.2 227.6L443.9 223.5L444.3 218L443.5 212.4L443.9 207.6L445.3 202.8L447.3 197.2L448.7 193.1L452.2 189.7L455.6 185.5L459.8 182.1L461.8 177.9L465.3 174.5L466 172.4L462.5 171.7L460.1 173.1L458.7 169.9L459.5 165.8L459.1 160.9L457.7 156.8L459.5 154L463.9 153.2L469.4 154L474.3 152.9L475.2 149.9L475 145L472.9 142.3L468.1 140.5L465.3 138.6L466.7 137.4L469 137L472 135.5L475 134L479 132L481.5 130.5L484 128.2L486 126.2L488 124.2L490 121.8L492 120.2L493.2 117.2L494 113.2L495 109.5L498 108L500.5 109.5L499.5 105.2L497 105.8L494 105.2L491 103.2L489.5 100L489 95.5Z" fill="#48d69b"/><path d="M283.2 95.3L283.6 100.1L286.4 102.9L288.5 107.7L293.3 109.1L297.4 111.9L302.3 114.7L307.8 116.7L309.5 118.8L309.9 123.6L311.9 127.1L314 128.5L315.4 127.1L314.7 122.9L313.3 119.5L314.7 116.7L318.2 114L320 110.5L319.5 107.1L317.5 103.6L316.4 99.5L317.2 95.3ZM335.4 95.3L336.1 99.5L338.9 102.9L341.7 100.1L342.3 95.3ZM289.8 142.3L293.3 140.9L296.1 140.2L298.1 138.1L300.9 139.9L302.6 143L300.2 143.7L298.1 141.6L295.4 142.3L292.6 143.7L290.5 143.2ZM298.1 156.8L297.9 151.3L299.5 147.8L301.6 146.8L300.9 149.9L299.8 152.6L299.8 156.8ZM306.1 147.8L308.5 146.8L309.9 149.9L310.8 147.8L312.6 149.2L311.3 151.3L309.2 153.3L307.8 150.6ZM308.5 158.2L311.9 156.1L312.6 157.1L309.2 159.1ZM314.7 152.5L319.5 152.5L319.5 153.6L314.7 153.6ZM517.5 95.5L524.5 95.5L524 99L522 102.5L519.5 106L517 109L514.5 112.5L511 116L507 117.5L503.5 117.5L501.5 115.5L501.2 112L501.8 109L500.5 107L498.5 106.8L497 105.5L498 104L501.5 104.5L504 106L505 110L507 113.5L510 113L513 110L515 106.5L516.5 103L517.2 99.5ZM525 95.5L537.5 95.5L536 97.5L532 98.5L527 99L525 98ZM488 110L490.5 107L494 105.5L497 105.9L499.8 105.1L502.5 105.8L503 107.8L500.5 108.2L498 107.6L495 108.8L493 111L490 113ZM465 176L465 173.5L470 172.5L474 172L477 170.5L479 167.5L479.5 164.5L481.5 162.5L484 160L486 156.5L487.5 154.5L491 154L495 153L498.5 152.2L499.5 153.8L500.5 157L503 159L506 160.8L509 162.5L510.5 164.5L510.8 167L510 168L507.5 167.5L504.5 168L503.8 169.2L502.2 171.2L500 170L495 170L490 170.5L485 171L479 172L475 174L470 175.2ZM502.2 171.2L503.8 169.2L504.5 170.2L507 171.2L509.5 171.7L511 169.5L511.2 167.5L513 165.6L514.8 164.6L515.8 166.2L516.8 164.6L515.5 162.5L512.5 159L509.5 156L506.5 153L504.5 150.5L504.5 149L505.5 147.8L507.2 150L508.5 148.5L509.5 151.5L512 154L515 156.5L517.5 159L518.7 162L519.5 164.5L521 167.5L523 170.5L524.5 173L526.5 175L527.5 177.5L530 179L534 181.5L530 181.5L526 180L523 180.5L521 182L519.5 184.5L519 186.5L515 186L512 184.5L510 182.5L506 181.5L503 180L500.5 178L501 175L502 172ZM525.3 174.9L527.3 174.2L526.9 170.1L527.3 165.2L528.7 162.1L530.8 161.1L532.2 163.2L532.9 167.3L532.4 171.4L534.2 173.9L537.7 174.5L541.8 173.1L546 174.9L548.8 174.5L551.8 173.1L551.8 177.7L550.1 183.9L544.6 185L539.1 185.3L534.2 182.5L530.1 179.7L526.6 178.4ZM536.5 158.2L537.1 154L539.9 149.2L542.7 145.7L546.8 147.1L550.3 149.9L553.7 147.1L556.5 143.7L556.8 147.8L559.9 152L563.7 155.4L563.7 158.9L559.2 159.8L555.1 159.3L551 157.5L546.8 156.8L542.7 158.9L538.5 159.3ZM576.5 149.2L579.3 145.7L583.4 144.1L587.6 144.4L586.2 147.1L583.4 149.2L582.7 152.6L584.8 155.4L587.6 157.5L589 160.2L586.9 162.3L588.3 166.5L589 169.9L585.5 170.6L581.4 169.2L580.7 165.1L582 161.6L580 158.2L577.9 154ZM599 149.2L601.4 146.4L603.5 145.7L604.8 148.5L603.5 152L600.7 152.6ZM548.5 194.2L551.7 193.5L555.1 198.6L558.6 204.8L562 211.1L565.5 217.3L568.2 222.1L569.2 225.6L570 229L568.2 229.7L566.2 227L563.7 224.2L560.4 219.4L556.9 213.6L553.4 207.2L550.1 200.7ZM577.5 189.7L580.7 188.4L583.7 191.4L586.5 194.8L590.3 196.7L594.5 196.4L597.7 198.4L595.9 199.6L592.7 200L589 202.5L585.8 201.1L582.7 197.5L580 194.5ZM544.2 254.6L548.4 254L548.4 257.7L544.7 258.2Z" fill="#c6fafa"/><path d="M356.2 140.9L358.2 137.4L360.3 134L362.4 133.3L364.4 135.4L367.9 135.4L369.3 138.1L370 141.6L369.3 144.4L367.2 144.4L365.1 143L363.1 143.7L361.7 141.6L358.9 141.9ZM385.2 95.3L390 95.3L389.7 97.7L387.7 97.1L385.9 97.9ZM419 166.7L422.5 165.8L422.8 166.7L419.4 167.8ZM303.7 206.2L307.8 204.2L313.3 204.8L317.5 206.9L321.6 209L323.7 210.8L322.3 212L317.5 211.1L314.7 208.3L309.2 207.2L305 208ZM316.4 214.5L320.2 214.1L321.3 215.5L317.5 216.3ZM315.4 196.6L316.8 196.3L318.9 199.3L320.9 202.8L320 203.5L317.8 200.3ZM317.8 194.5L319.1 194.5L322.3 198.6L323 200.7L321.6 200.3L319.5 197.2ZM322.3 210.1L327.1 211.1L331.3 211.3L335.4 212.4L337.5 214.5L334.1 215.5L330.6 216.3L327.1 215.2L323.7 215.5L322.3 213.8ZM338.9 214.4L343.7 214.7L343.7 215.8L339.3 215.8ZM350.6 219.1L351.7 218.8L352.6 223.5L351.6 223.5ZM322.3 202.1L324.1 202.1L324.1 205.5L322.3 205.5ZM325.5 208L327.8 208L327.8 209.7L325.5 209.7ZM289 252.9L290.6 252.9L290.6 255.9L289 255.9ZM495 156L496.5 153.5L498.5 153L499 155.5L498.5 158L499 161L498.5 164.5L497 166.5L495.5 165.5L495 162L495.5 159ZM482 164.2L485 162.7L487.5 162L487.2 163.4L484 165L482.5 165.6ZM527 174.8L530 174.2L533 175.2L532.5 176.5L529 176.5ZM545.7 175L549.9 174.5L550.1 176.7L546.3 177.2ZM567.7 300.6L569.1 293L571.2 287.4L575.3 283.3L578.8 279.8L580.9 278.5L582.5 281.9L582.2 287.4L580.2 294.4L578.1 299.9L575.3 304L571.9 307.5L569.1 306.1ZM567.3 277.1L568.7 277.1L568.7 278.9L567.3 278.9ZM643.2 234.6L645.6 233.4L647.9 236.6L647.4 240.1L644.9 241.2L643.5 238.7ZM701.8 212.4L704 211.1L706.4 212.2L706 214.9L703.2 215.5ZM726.4 200.7L728.5 199L730.3 200.7L729.5 204.8L727.8 206.5L726.7 204.2ZM669.5 225.6L670.5 225.6L670.6 229L669.6 229ZM676.7 244.6L679.4 240.5L685.7 246L689.1 250.1L693.3 253.6L697.4 257.7L699.5 262.6L698.8 266.7L695.3 266L691.2 261.9L686.4 257.1L682.2 252.2L678.8 248.8ZM696 264.7L700.2 265.3L707.1 266.7L714 268.1L720.9 270.2L727.8 270.9L734.7 270.2L739.5 269.8L739.5 272.9L734.7 274.3L733.3 272.9L727.8 273.6L720.9 272.9L714 271.6L707.1 270.2L700.2 268.8L696.7 267.4ZM702.9 251.5L705.7 248.1L709.8 245.3L714.7 241.2L720.9 240.5L723 245.3L722.3 250.1L720.9 254.3L718.8 258.4L715.4 260.5L711.2 259.8L707.1 258.4L704.3 255.7ZM724.3 255.7L726.4 252.2L729.2 250.8L734.7 250.1L736.8 251.5L733.3 252.9L729.9 253.6L730.6 257.1L733.3 260.5L731.9 264L729.2 261.2L727.8 258.4L726.4 262.6L724.3 261.2ZM734.7 255.7L738.9 255L739.5 259.1L736.1 259.8ZM715.4 321.3L714 315.1L712.6 309.6L712.6 304L714 299.9L718.1 297.1L723.7 295.7L728.5 293.7L731.9 288.8L735.4 285.4L738.9 282.6L740.9 281.6L740.9 321.3ZM726.4 215.9L729.9 214.5L732.6 217.3L733.3 222.1L731.9 226.3L729.2 225.6L727.1 221.4ZM730.6 227.6L734.7 226.3L736.8 230.4L735.4 234.6L731.9 233.2ZM733.3 235.9L739.5 233.9L740.2 245.6L734.7 247.7L731.9 242.8ZM720.9 237.3L724.3 234.6L725.7 235.9L722.3 239.4ZM463.5 103.5L466.5 102.5L470.5 102L473 103.5L473.5 106.5L472.5 109L474 112L476 115L478 118L479.5 121.5L481.5 124.5L482.5 127L481.5 129.5L479 130.5L475 131.5L472 132.5L469 133.2L467.5 132.5L469.5 130.5L471.5 128.5L469 127L467.5 125L469.5 123L471.5 121L470.5 118.5L468 117.5L466.5 115L467.5 112L466 109.5L464.5 106.5ZM457 120.5L458.5 118L461.5 116L465 115.5L467.5 117.5L468 121L466.5 124.5L463.5 127L460 128.5L457.5 127L456.8 124Z" fill="#48d69b"/></g>
<polyline points="504,113.7 503,109.8 501.9,107.1 499.2,105.7 489.8,109.8 488.8,114.7 485.8,120.9 484.6,123.6 482.6,126.4 479.1,130.5 472.2,133 466.3,137 457,152.6 457,154.7 446.7,192.4 440.7,208.6 441.8,229.7 442.9,231.8 446.7,235.2 448.7,237 460.9,244.9 474,243.9 487,240.9 489.9,252.9 500.9,289.8" fill="none" stroke="#000" stroke-width="1" shape-rendering="crispEdges"/>
<polyline points="500.9,289.8 511.8,320.6" fill="none" stroke="#0000ff" stroke-width="1.3" shape-rendering="crispEdges"/>
<polyline points="551.8,320.3 574.6,306.8 600.8,289 673.8,240.2 680,241.8 684.2,244.8 687.5,247.2 689.5,249 691.2,250.2 693.8,249.8 696.8,244 703,236.8 727.5,212.4 728.5,211.1 740.9,198.6" fill="none" stroke="#000" stroke-width="1" shape-rendering="crispEdges"/>
<circle cx="503" cy="109.8" r="1.9" fill="#fff" stroke="#000" stroke-width="1"/>
<circle cx="501.9" cy="107.1" r="1.9" fill="#fff" stroke="#000" stroke-width="1"/>
<circle cx="499.2" cy="105.7" r="1.9" fill="#fff" stroke="#000" stroke-width="1"/>
<circle cx="489.8" cy="109.8" r="1.9" fill="#fff" stroke="#000" stroke-width="1"/>
<circle cx="488.8" cy="114.7" r="1.9" fill="#fff" stroke="#000" stroke-width="1"/>
<circle cx="485.8" cy="120.9" r="1.9" fill="#fff" stroke="#000" stroke-width="1"/>
<circle cx="484.6" cy="123.6" r="1.9" fill="#fff" stroke="#000" stroke-width="1"/>
<circle cx="482.6" cy="126.4" r="1.9" fill="#fff" stroke="#000" stroke-width="1"/>
<circle cx="479.1" cy="130.5" r="1.9" fill="#fff" stroke="#000" stroke-width="1"/>
<circle cx="472.2" cy="133" r="1.9" fill="#fff" stroke="#000" stroke-width="1"/>
<circle cx="466.3" cy="137" r="1.9" fill="#000" stroke="#000" stroke-width="1"/>
<circle cx="457" cy="152.6" r="1.9" fill="#000" stroke="#000" stroke-width="1"/>
<circle cx="457" cy="154.7" r="1.9" fill="#fff" stroke="#000" stroke-width="1"/>
<circle cx="446.7" cy="192.4" r="1.9" fill="#fff" stroke="#000" stroke-width="1"/>
<circle cx="440.7" cy="208.6" r="1.9" fill="#fff" stroke="#000" stroke-width="1"/>
<circle cx="441.8" cy="229.7" r="1.9" fill="#fff" stroke="#000" stroke-width="1"/>
<circle cx="442.9" cy="231.8" r="1.9" fill="#fff" stroke="#000" stroke-width="1"/>
<circle cx="446.7" cy="235.2" r="1.9" fill="#fff" stroke="#000" stroke-width="1"/>
<circle cx="448.7" cy="237" r="1.9" fill="#fff" stroke="#000" stroke-width="1"/>
<circle cx="460.9" cy="244.9" r="1.9" fill="#fff" stroke="#000" stroke-width="1"/>
<circle cx="474" cy="243.9" r="1.9" fill="#fff" stroke="#000" stroke-width="1"/>
<circle cx="489.9" cy="252.9" r="1.9" fill="#fff" stroke="#000" stroke-width="1"/>
<circle cx="500.9" cy="289.8" r="1.9" fill="#fff" stroke="#000" stroke-width="1"/>
<circle cx="574.6" cy="306.8" r="1.9" fill="#fff" stroke="#000" stroke-width="1"/>
<circle cx="600.8" cy="289" r="1.9" fill="#fff" stroke="#000" stroke-width="1"/>
<circle cx="673.8" cy="240.2" r="1.9" fill="#fff" stroke="#000" stroke-width="1"/>
<circle cx="680" cy="241.8" r="1.9" fill="#fff" stroke="#000" stroke-width="1"/>
<circle cx="684.2" cy="244.8" r="1.9" fill="#fff" stroke="#000" stroke-width="1"/>
<circle cx="687.5" cy="247.2" r="1.9" fill="#fff" stroke="#000" stroke-width="1"/>
<circle cx="689.5" cy="249" r="1.9" fill="#fff" stroke="#000" stroke-width="1"/>
<circle cx="691.2" cy="250.2" r="1.9" fill="#fff" stroke="#000" stroke-width="1"/>
<circle cx="693.8" cy="249.8" r="1.9" fill="#fff" stroke="#000" stroke-width="1"/>
<circle cx="696.8" cy="244" r="1.9" fill="#fff" stroke="#000" stroke-width="1"/>
<circle cx="703" cy="236.8" r="1.9" fill="#fff" stroke="#000" stroke-width="1"/>
<circle cx="727.5" cy="212.4" r="1.9" fill="#fff" stroke="#000" stroke-width="1"/>
<circle cx="728.5" cy="211.1" r="1.9" fill="#fff" stroke="#000" stroke-width="1"/>
<circle cx="504" cy="113.7" r="2.4" fill="#fff" stroke="#f00" stroke-width="1.2"/>
<circle cx="487" cy="240.9" r="2.4" fill="#fff" stroke="#f00" stroke-width="1.2"/>
<text x="508.5" y="118.3" fill="#0000ff" font-family="Liberation Sans" font-size="9.6" textLength="110.5" lengthAdjust="spacing">Copenhagen (Denmark)</text>
<text x="491.5" y="244.8" fill="#0000ff" font-family="Liberation Sans" font-size="9.6" textLength="92" lengthAdjust="spacing">Abo FPSO (Nigeria)</text>
</svg>
</body></html>
